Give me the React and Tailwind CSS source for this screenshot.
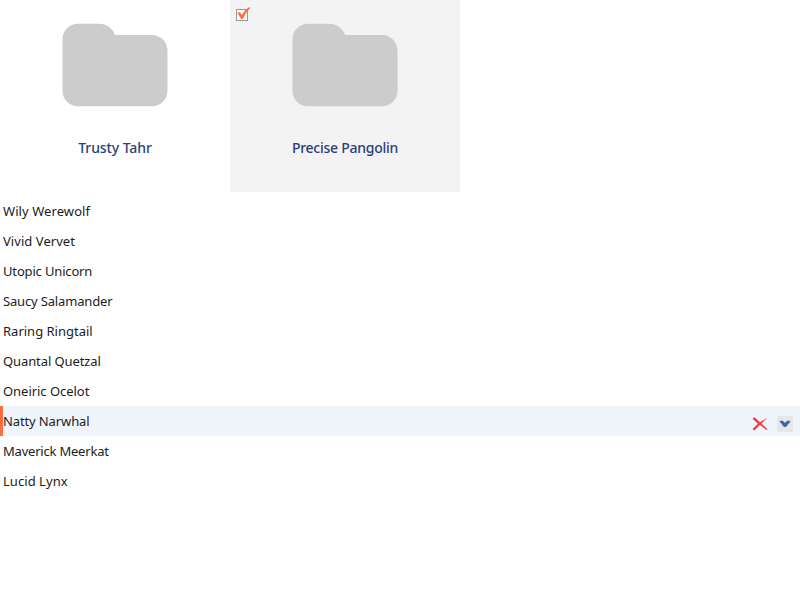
const folders = [
  { name: "Trusty Tahr", tracking: "tracking-[-0.1px]", selected: false },
  { name: "Precise Pangolin", tracking: "tracking-[-0.25px]", selected: true },
];

const rows = [
  { name: "Wily Werewolf", tracking: "tracking-[0.08px]" },
  { name: "Vivid Vervet", tracking: "tracking-[0.05px]" },
  { name: "Utopic Unicorn", tracking: "tracking-[-0.16px]" },
  { name: "Saucy Salamander", tracking: "tracking-[-0.16px]" },
  { name: "Raring Ringtail", tracking: "tracking-[0px]" },
  { name: "Quantal Quetzal", tracking: "tracking-[-0.1px]" },
  { name: "Oneiric Ocelot", tracking: "tracking-[-0.04px]" },
  { name: "Natty Narwhal", tracking: "tracking-[-0.12px]", active: true },
  { name: "Maverick Meerkat", tracking: "tracking-[-0.21px]" },
  { name: "Lucid Lynx", tracking: "tracking-[0.05px]" },
];

function FolderIcon() {
  return (
    <svg width="106" height="84" viewBox="0 0 106 84" className="block">
      <path d="M16 0.700H37C44.500 0.700 50.500 5 53 12H90C98.500 12 105.500 19 105.500 27.500V68C105.500 76.500 98.500 83.300 90 83.300H16C7.500 83.300 0.500 76.500 0.500 68V16C0.500 7.500 7.500 0.700 16 0.700Z" fill="#ccc" />
    </svg>
  );
}

function CheckIcon() {
  return (
    <svg width="16" height="16" viewBox="0 0 16 16" className="absolute left-[5px] top-[6px]">
      <rect x="1.5" y="3.500" width="11" height="11" fill="#f8f8f8" stroke="#999" />
      <path d="M2.500 7L4.600 6L7 9C8.800 5.800 11 3 14.300 1L15.200 2C12 5 9.800 8.700 7.900 13H6.200Z" fill="#ff6f3d" />
    </svg>
  );
}

function DeleteIcon() {
  return (
    <svg width="16" height="14" viewBox="0 0 16 14" className="block">
      <path d="M0.500 1.700L2.500 0.300L8 5.200L15.300 0.500L9.500 6.500L15.500 12.200L14.500 13L8 8L2.300 13.500L0.500 12L6 6.700Z" fill="#f23c3c" />
    </svg>
  );
}

function MenuIcon() {
  return (
    <svg width="16" height="16" viewBox="0 0 16 16" className="block">
      <rect width="16" height="16" rx="1.500" fill="#e6e6e6" />
      <path d="M2.800 4.800H6L8 7L10 4.800H13.200V5.800L9 11H7L2.800 5.800Z" fill="#4463a8" />
    </svg>
  );
}

export default function App() {
  return (
    <main className="h-[600px] w-[800px] overflow-hidden bg-white font-['Noto_Sans',sans-serif]">
      <div className="flex h-48">
        {folders.map((f) => (
          <div key={f.name} className={`relative flex w-[230px] flex-col items-center pt-[23px] ${f.selected ? "bg-[#f3f3f3]" : ""}`}>
            {f.selected && <CheckIcon />}
            <FolderIcon />
            <div className={`mt-[31px] text-[14px] font-medium leading-5 text-[#2a3f76] ${f.tracking}`}>{f.name}</div>
          </div>
        ))}
      </div>
      <ul className="pt-1">
        {rows.map((r) => (
          <li key={r.name} className={`flex h-[30px] items-center justify-between border-l-[3px] pr-[7px] ${r.active ? "border-[#ff6f3d] bg-[#f0f5fc]" : "border-transparent"}`}>
            <span className={`text-[13px] leading-[30px] text-[#1c1c1c] ${r.tracking}`}>{r.name}</span>
            {r.active && (
              <div className="mt-[6px] flex items-center gap-[9px]">
                <DeleteIcon />
                <MenuIcon />
              </div>
            )}
          </li>
        ))}
      </ul>
    </main>
  );
}
